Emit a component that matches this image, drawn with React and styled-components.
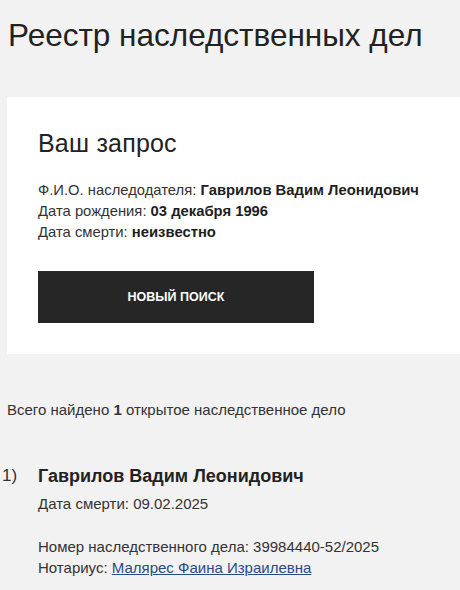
import React from "react";
import styled, {createGlobalStyle} from "styled-components";

const GlobalStyle = createGlobalStyle`
    html, body {
        margin: 0;
        padding: 0;
        background: #F2F2F2;
    }
    body {
        font-family: "Liberation Sans", Arial, sans-serif;
        color: #222222;
    }
`

const Page = styled.div`
    width: 460px;
    overflow: hidden;
    padding-top: 17px;
`

const Title = styled.h1`
    margin: 0 0 0 8px;
    font-size: 31.5px;
    font-weight: 400;
    line-height: 36px;
    color: #222222;
`

const Card = styled.section`
    margin: 44px -20px 0 7px;
    background: #FFFFFF;
    padding: 31px 0 31px 31px;
`

const CardTitle = styled.h2`
    margin: 0 0 22px;
    font-size: 25px;
    font-weight: 400;
    line-height: 30px;
    letter-spacing: 0.2px;
`

const InfoLine = styled.div`
    font-size: 14.8px;
    line-height: 21px;
    color: #333333;

    b {
        color: #1E1E1E;
    }
`

const Button = styled.button`
    display: block;
    margin-top: 28px;
    width: 276px;
    height: 52px;
    border: none;
    background: #262626;
    color: #FFFFFF;
    font-family: inherit;
    font-size: 12.5px;
    font-weight: 700;
    text-transform: uppercase;
    cursor: pointer;
`

const Summary = styled.div`
    margin: 46px 0 0 7px;
    font-size: 15px;
    line-height: 20px;
    color: #333333;
`

const Result = styled.div`
    display: grid;
    grid-template-columns: 36px 1fr;
    margin: 44px 0 0 2px;
`

const Index = styled.div`
    font-size: 17px;
    line-height: 24px;
    color: #333333;
`

const ResultBody = styled.div``

const ResultName = styled.div`
    font-size: 18px;
    font-weight: 700;
    line-height: 24px;
    color: #222222;
`

const ResultLine = styled.div`
    font-size: 15px;
    line-height: 21px;
    color: #333333;
    margin-top: ${p => p.gap || 0}px;
`

const Link = styled.a`
    color: #2A4A86;
    text-decoration: underline;
`

export default function App() {
    return <>
        <GlobalStyle />
        <Page>
            <Title>Реестр наследственных дел</Title>
            <Card>
                <CardTitle>Ваш запрос</CardTitle>
                <InfoLine>Ф.И.О. наследодателя: <b>Гаврилов Вадим Леонидович</b></InfoLine>
                <InfoLine>Дата рождения: <b>03 декабря 1996</b></InfoLine>
                <InfoLine>Дата смерти: <b>неизвестно</b></InfoLine>
                <Button>Новый поиск</Button>
            </Card>
            <Summary>Всего найдено <b>1</b> открытое наследственное дело</Summary>
            <Result>
                <Index>1)</Index>
                <ResultBody>
                    <ResultName>Гаврилов Вадим Леонидович</ResultName>
                    <ResultLine gap={5}>Дата смерти: 09.02.2025</ResultLine>
                    <ResultLine gap={22}>Номер наследственного дела: 39984440-52/2025</ResultLine>
                    <ResultLine>Нотариус: <Link href="#">Малярес Фаина Израилевна</Link></ResultLine>
                </ResultBody>
            </Result>
        </Page>
    </>
}
